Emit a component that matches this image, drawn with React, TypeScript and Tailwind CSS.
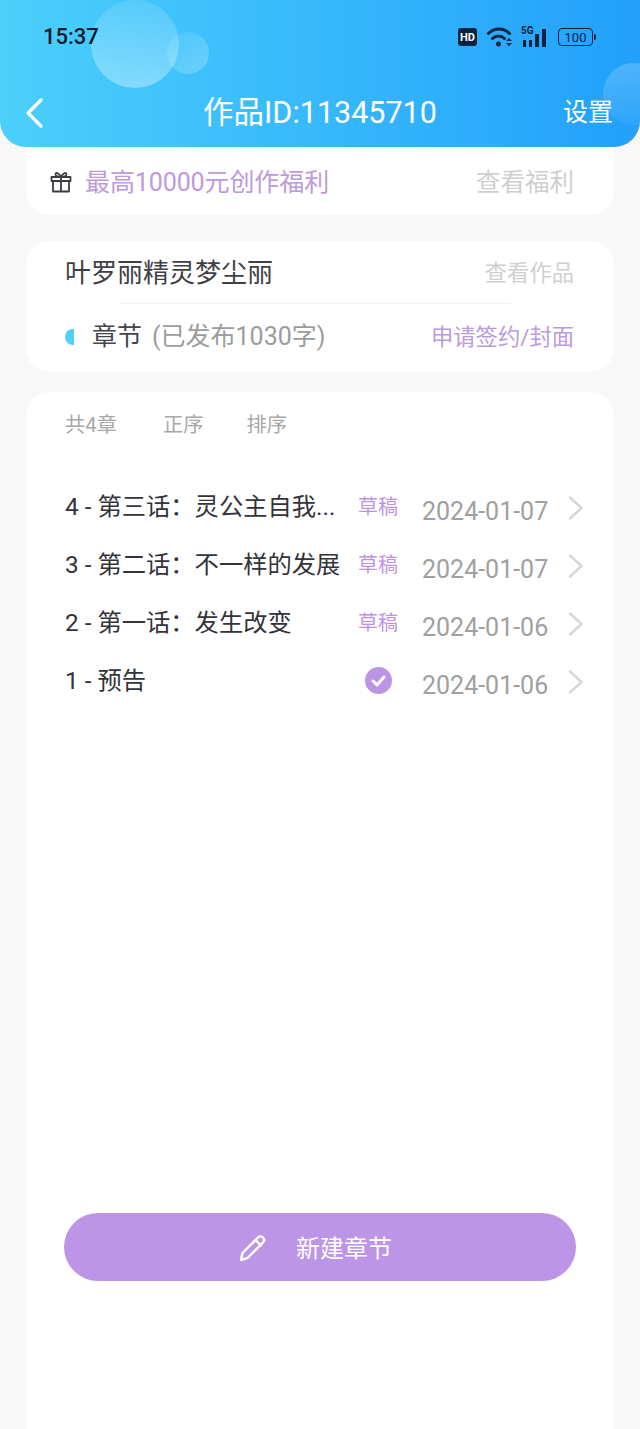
import React from "react";

const font = { fontFamily: '"Roboto","Noto Sans CJK SC",sans-serif' };

function Row({ title, status, date }: { title: string; status: "draft" | "done"; date: string }) {
  return (
    <div className="flex h-[58px] items-center">
      <div className="-ml-[1px] w-[293px] shrink-0 truncate text-[24.3px] leading-[34px] text-[#33333a]">{title}</div>
      <div className="flex w-[40px] shrink-0 justify-center whitespace-nowrap text-[20px] leading-[28px] text-[#bc94e6]">
        {status === "draft" ? (
          "草稿"
        ) : (
          <svg className="-translate-y-[1px]" width="27" height="27" viewBox="0 0 27 27">
            <circle cx="13.5" cy="13.5" r="13.5" fill="#bc94e6" />
            <path d="M8 14l4 4 7-8" fill="none" stroke="#fff" strokeWidth="3" strokeLinecap="round" strokeLinejoin="round" />
          </svg>
        )}
      </div>
      <div className="ml-[24px] w-[127px] shrink-0 translate-y-[5px] whitespace-nowrap text-[25px] leading-[34px] text-[#a0a0a0]">{date}</div>
      <svg className="ml-[19px] shrink-0 translate-y-[1px]" width="16" height="26" viewBox="0 0 16 26" fill="none">
        <path d="M2 2.5l11.5 10.5L2 23.5" stroke="#d6d6d6" strokeWidth="2.4" strokeLinecap="round" strokeLinejoin="round" />
      </svg>
    </div>
  );
}

export default function App() {
  return (
    <div className="flex h-[1429px] w-[640px] flex-col overflow-hidden bg-[#f8f8f8]" style={font}>
      <header className="relative h-[147px] shrink-0 overflow-hidden rounded-b-[26px] bg-gradient-to-r from-[#4bd0fb] to-[#22a0fb]">
        <div className="absolute left-[91px] top-0 h-[88px] w-[88px] rounded-full bg-gradient-to-b from-white/10 to-white/35" />
        <div className="absolute left-[167px] top-[32px] h-[42px] w-[42px] rounded-full bg-gradient-to-br from-white/5 to-white/25" />
        <div className="absolute left-[603px] top-[63px] h-[62px] w-[62px] rounded-full bg-gradient-to-b from-white/20 to-white/5" />

        <div className="relative flex h-[74px] items-center pl-[43px] pr-[44px]">
          <span className="text-[22px] font-medium leading-[26px] text-[#0a1a2c]">15:37</span>
          <div className="ml-auto flex items-center">
            <span className="flex h-[18px] w-[19px] items-center justify-center rounded-[3px] bg-[#06233f] text-[11px] font-bold leading-none text-white">HD</span>
            <svg className="ml-[10px]" width="25" height="20" viewBox="0 0 25 20" fill="none">
              <path d="M1.5 6.500C7.500 .500 16.500 .500 22.500 6.500" stroke="#06233f" strokeWidth="3" strokeLinecap="round" />
              <path d="M5.500 11.500c3.500-3.500 8.500-3.500 12 0" stroke="#06233f" strokeWidth="3" strokeLinecap="round" />
              <circle cx="11.500" cy="17" r="2.500" fill="#06233f" />
              <path d="M19 14h6l-3-3zM19 16h6l-3 3z" fill="#06233f" />
            </svg>
            <div className="relative ml-[9px] h-[20px] w-[27px]">
              <span className="absolute left-0 top-[-2px] text-[10px] font-bold leading-[12px] text-[#06233f]">5G</span>
              <div className="absolute inset-x-0 bottom-0 flex items-end justify-start gap-[3px] pl-[2px]">
                <span className="h-[7px] w-[3px] bg-[#06233f]" />
                <span className="h-[7px] w-[3px] bg-[#06233f]" />
                <span className="h-[13px] w-[4px] bg-[#06233f]" />
                <span className="h-[18px] w-[4px] bg-[#06233f]" />
              </div>
            </div>
            <div className="ml-[10px] flex items-center">
              <span className="flex h-[18px] w-[35px] items-center justify-center rounded-[4px] border-[1.5px] border-[#06233f] text-[13px] leading-none text-[#06233f]">100</span>
              <span className="ml-[1px] h-[6px] w-[2px] rounded-r-sm bg-[#06233f]" />
            </div>
          </div>
        </div>

        <div className="relative mt-[9px] flex h-[60px] items-center justify-between pl-[25px] pr-[27px] text-white">
          <svg width="20" height="32" viewBox="0 0 20 32" fill="none">
            <path d="M16 3L3 16l13 13" stroke="#fff" strokeWidth="3.200" strokeLinecap="round" strokeLinejoin="round" />
          </svg>
          <div className="absolute left-0 right-0 text-center text-[30.500px] leading-[40px]">作品ID:11345710</div>
          <span className="text-[25px] leading-[34px]">设置</span>
        </div>
      </header>

      <section className="mx-[26px] flex h-[68px] shrink-0 items-center rounded-b-[24px] bg-white pl-[24px] pr-[40px] pt-[4px]">
        <svg className="-translate-y-[1px]" width="22" height="22" viewBox="0 0 22 22" fill="none" stroke="#3c3c44" strokeWidth="1.800" strokeLinejoin="round">
          <rect x="1.500" y="6" width="19" height="4" />
          <rect x="3" y="10" width="16" height="10.500" />
          <path d="M11 6v14.500M11 6C9 2 6 1 5.500 3c-.4 2 3 3 5.500 3zM11 6c2-4 5-5 5.500-3 .4 2-3 3-5.500 3z" />
        </svg>
        <span className="ml-[13px] text-[25px] leading-[34px] tracking-[-0.1px] text-[#bc9ade]">最高10000元创作福利</span>
        <span className="ml-auto text-[24.500px] leading-[34px] text-[#cfcfcf]">查看福利</span>
      </section>

      <section className="mx-[26px] mt-[26px] h-[131px] shrink-0 rounded-[24px] bg-white px-[40px]">
        <div className="flex h-[62px] items-center justify-between pt-[2px]">
          <span className="-ml-[1px] text-[26px] leading-[36px] text-[#3f3f46]">叶罗丽精灵梦尘丽</span>
          <span className="text-[22.300px] leading-[32px] text-[#cfcfcf]">查看作品</span>
        </div>
        <div className="ml-[54px] mr-[64px] h-px bg-[#f3f3f3]" />
        <div className="flex h-[66px] items-center">
          <span className="-ml-[1px] h-[16px] w-[9px] rounded-l-full bg-[#4fd0f7]" />
          <span className="ml-[18px] text-[25px] leading-[34px] text-[#44444c]">章节</span>
          <span className="ml-[10px] text-[25px] leading-[34px] text-[#9c9c9c]">(已发布1030字)</span>
          <span className="ml-auto text-[22.300px] leading-[32px] text-[#bc9ade]">申请签约/封面</span>
        </div>
      </section>

      <section className="mx-[26px] mt-[20px] flex min-h-0 flex-1 flex-col rounded-t-[24px] bg-white px-[40px]">
        <div className="-ml-[1px] flex h-[66px] shrink-0 items-center text-[20.300px] leading-[28px] text-[#a8a8a8]">
          <span>共4章</span>
          <span className="ml-[46px]">正序</span>
          <span className="ml-[43px]">排序</span>
        </div>
        <div className="mt-[20px] shrink-0">
          <Row title="4 - 第三话：灵公主自我..." status="draft" date="2024-01-07" />
          <Row title="3 - 第二话：不一样的发展" status="draft" date="2024-01-07" />
          <Row title="2 - 第一话：发生改变" status="draft" date="2024-01-06" />
          <Row title="1 - 预告" status="done" date="2024-01-06" />
        </div>
        <button className="-mx-[2px] mt-[503px] flex h-[68px] shrink-0 items-center justify-center rounded-full bg-[#bd95e7] pr-[10px] pt-[2px] text-white">
          <svg width="30" height="28" viewBox="0 0 30 28" fill="none" stroke="#fff" strokeWidth="2.400" strokeLinejoin="round" strokeLinecap="round">
            <path d="M3 26l1.500-7L20 3.500c1.500-1.500 3.500-1.500 5 0s1.500 3.500 0 5L9.500 24z" />
            <path d="M17.500 6l5.500 5.500" />
          </svg>
          <span className="ml-[28px] translate-y-[1px] text-[24px] leading-[34px]">新建章节</span>
        </button>
      </section>
    </div>
  );
}
